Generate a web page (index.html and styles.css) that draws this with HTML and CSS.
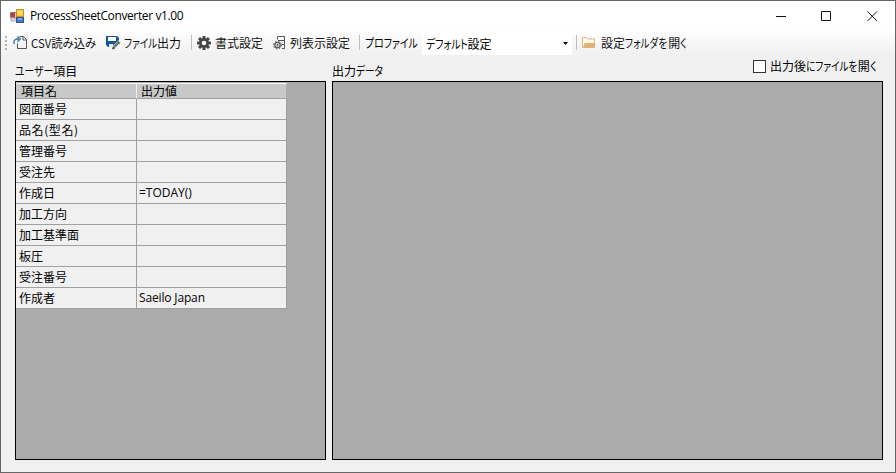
FILE: index.html
```html
<!DOCTYPE html>
<html lang="ja">
<head>
<meta charset="utf-8">
<title>ProcessSheetConverter v1.00</title>
<link rel="stylesheet" href="styles.css">
</head>
<body>
<div class="window">
  <header class="titlebar">
    <svg class="app-icon" width="15" height="14" viewBox="0 0 15 14">
      <rect x=".5" y="3.5" width="7" height="5" fill="#f3dfda" stroke="#aa6c62"/>
      <rect x="1" y="4" width="4" height="4" fill="#bf3d31"/>
      <rect x="6.500" y=".5" width="7" height="7" fill="#ffc93b" stroke="#c19234"/>
      <rect x="8" y="2" width="4" height="3" fill="#ffe36c"/>
      <rect x="1" y="9" width="4" height="3" fill="#d9dce3" stroke="#a9adb6"/>
      <rect x="6.500" y="8.500" width="7" height="5" fill="#4774c3" stroke="#355690"/>
      <rect x="8" y="9" width="4" height="2" fill="#82a7e5"/>
    </svg>
    <span class="title">ProcessSheetConverter v1.00</span>
    <div class="controls">
      <svg width="10" height="11" viewBox="0 0 10 11"><path d="M0 5.500h10" stroke="#111"/></svg>
      <svg width="11" height="11" viewBox="0 0 11 11"><path d="M.5 .5h9v9h-9z" fill="none" stroke="#111"/></svg>
      <svg width="11" height="11" viewBox="0 0 11 11"><path d="M.5 .5l9.500 9.500M10 .5l-9.500 9.500" stroke="#111"/></svg>
    </div>
  </header>

  <nav class="toolbar">
    <span class="grip"></span>
    <button class="tool tool-csv">
      <svg width="15" height="15" viewBox="0 0 15 15" fill="none">
        <path d="M6.500 1.500h4l3 3v9h-9v-5M10 1.500v3.500h3.500" stroke="#555"/>
        <path d="M1.500 9C-.2 5.500 2 3.800 6 4M4.500 1.500L7.200 4 4.500 6.700" stroke="#2f77ad" stroke-width="1.300"/>
      </svg>
      <span class="csv-text">CSV読み込み</span>
    </button>
    <button class="tool tool-output">
      <svg width="15" height="15" viewBox="0 0 15 15">
        <path d="M0 1h11l2 2v4l-5 5H2l-2-2z" fill="#11559b"/>
        <path d="M2 2h8v4H2z" fill="#fff"/>
        <path d="M3 9h4v3H3z" fill="#dce9f5"/>
        <path d="M6.500 14l.8-3.500 5-5 2.300 2.300-5 5z" fill="#777" stroke="#fff" stroke-width=".6"/>
        <path d="M6.500 14l.5-2 1.500 1.500zM11.500 6.500l2 2" fill="#333" stroke="#444" stroke-width=".7"/>
      </svg>
      <span><span class="kana k4">ファイル</span>出力</span>
    </button>
    <i class="sep sep-a"></i>
    <button class="tool tool-format">
      <svg width="14" height="14" viewBox="0 0 14 14">
        <g fill="#444"><rect x="5.500" width="3" height="14" rx=".5"/><rect x="5.500" width="3" height="14" rx=".5" transform="rotate(45 7 7)"/><rect x="5.500" width="3" height="14" rx=".5" transform="rotate(90 7 7)"/><rect x="5.500" width="3" height="14" rx=".5" transform="rotate(135 7 7)"/><circle cx="7" cy="7" r="4.800"/></g>
        <circle cx="7" cy="7" r="2.300" fill="#f8f8f8"/>
      </svg>
      <span>書式設定</span>
    </button>
    <button class="tool tool-columns">
      <svg width="14" height="15" viewBox="0 0 14 15" fill="none" stroke="#555">
        <path d="M4.500 4.500V1.500h7v12H9M5 5.500h6.500M8.500 9.500h3"/>
        <circle cx="4.500" cy="10" r="2.700" stroke-width="1.300"/>
        <circle cx="4.500" cy="10" r="4" stroke-width="1" stroke-dasharray="1.600 1.540"/>
        <circle cx="4.500" cy="10" r=".7" fill="#555"/>
      </svg>
      <span>列表示設定</span>
    </button>
    <i class="sep sep-b"></i>
    <span class="profile-label"><span class="kana k6">プロファイル</span></span>
    <div class="combo">
      <span><span class="kana k5">デフォルト</span>設定</span>
      <svg width="5" height="3" viewBox="0 0 5 3"><path d="M0 0h5L2.500 3z" fill="#000"/></svg>
    </div>
    <i class="sep sep-c"></i>
    <button class="tool tool-folder">
      <svg width="14" height="12" viewBox="0 0 14 12">
        <path d="M.5 10.500v-10h4l1.500 1.500h6.500v8.500z" fill="#fffaf0" stroke="#dfb577"/>
        <path d="M1 11l1.500-5h11L12.500 11z" fill="#dfb577"/>
      </svg>
      <span>設定<span class="kana k5">フォルダを</span>開<span class="kana k1">く</span></span>
    </button>
  </nav>

  <main class="content">
    <section class="pane user-pane">
      <div class="pane-head"><label class="user-label"><span class="kana k4">ユーザー</span>項目</label></div>
      <div class="view">
        <table class="grid">
          <thead><tr><th>項目名</th><th>出力値</th></tr></thead>
          <tbody>
            <tr><td>図面番号</td><td></td></tr>
            <tr><td class="model">品名(型名)</td><td></td></tr>
            <tr><td>管理番号</td><td></td></tr>
            <tr><td>受注先</td><td></td></tr>
            <tr><td>作成日</td><td class="formula">=TODAY()</td></tr>
            <tr><td>加工方向</td><td></td></tr>
            <tr><td>加工基準面</td><td></td></tr>
            <tr><td>板圧</td><td></td></tr>
            <tr><td>受注番号</td><td></td></tr>
            <tr><td>作成者</td><td class="author">Saeilo Japan</td></tr>
          </tbody>
        </table>
      </div>
    </section>
    <section class="pane output-pane">
      <div class="pane-head">
        <label class="output-label">出力<span class="kana k3">データ</span></label>
        <label class="open-after"><i class="checkbox"></i><span>出力後<span class="kana k6">にファイルを</span>開<span class="kana k1">く</span></span></label>
      </div>
      <div class="view"></div>
    </section>
  </main>
</div>
</body>
</html>
```
FILE: styles.css
```css
* { box-sizing: border-box; }
body { margin: 0; }
.window {
  width: 896px;
  height: 473px;
  border: 1px solid #666;
  background: #f0f0f0;
  color: #000;
  font: 12px/16px "Noto Sans CJK JP", sans-serif;
  font-feature-settings: "palt";
  display: flex;
  flex-direction: column;
  overflow: hidden;
  white-space: nowrap;
}
.titlebar {
  height: 30px;
  flex: none;
  display: flex;
  align-items: center;
  padding: 0 17px 0 9px;
  background: #fff;
}
.app-icon { margin-right: 5px; }
.title { font: 12px/16px "Open Sans", sans-serif; letter-spacing: -.38px; }
.controls { margin-left: auto; display: flex; gap: 35px; }
.toolbar {
  height: 25px;
  flex: none;
  display: flex;
  align-items: center;
  padding: 0 0 2px 4px;
  background: linear-gradient(#fdfdfd, #f0f0f0);
}
.grip {
  width: 2px;
  height: 14px;
  margin-right: 6px;
  background: repeating-linear-gradient(#b4b4b4 0 2px, transparent 2px 4px);
}
.kana {
  display: inline-block;
  transform: scaleX(.8);
  transform-origin: left;
}
.k1 { margin-right: -2px; }
.k3 { margin-right: -7px; }
.k4 { margin-right: -8.500px; }
.k5 { margin-right: -9.500px; }
.k6 { margin-right: -12.500px; }
.tool {
  display: flex;
  align-items: center;
  flex: none;
  gap: 4px;
  padding: 0;
  border: 0;
  background: none;
  color: #111;
  font: inherit;
  font-feature-settings: inherit;
}
.tool svg { flex: none; }
.tool-csv { width: 93px; gap: 3px; }
.csv-text { transform: scaleX(.945); transform-origin: left; }
.tool-output { width: 85px; gap: 3px; }
.tool-format { width: 76px; gap: 4px; }
.tool-columns { width: 85px; gap: 3px; }
.sep { width: 1px; height: 15px; flex: none; background: #bcbcbc; }
.sep-a { margin-right: 5px; }
.sep-b { margin: 0 5px 0 1px; }
.sep-c { margin: 0 5px 0 4px; }
.profile-label { width: 57px; flex: none; }
.profile-label .kana { transform: scaleX(.82); }
.combo {
  width: 150px;
  height: 23px;
  flex: none;
  display: flex;
  align-items: center;
  justify-content: space-between;
  padding: 0 4px;
  margin-bottom: -2px;
  background: #fff;
}
.combo .kana { transform: scaleX(.82); }
.tool-folder { gap: 5px; }
.content { flex: 1; display: flex; gap: 6px; padding: 0 12px 12px 14px; }
.pane { display: flex; flex-direction: column; }
.user-pane { width: 311px; }
.output-pane { flex: 1; }
.pane-head {
  height: 25px;
  flex: none;
  display: flex;
  justify-content: space-between;
  align-items: flex-start;
}
.user-label, .output-label { padding-top: 7px; }
.user-label .kana { transform: scaleX(.82); }
.open-after { display: flex; align-items: center; gap: 4px; padding: 2px 7px 0 0; }
.checkbox { width: 13px; height: 13px; border: 1px solid #333; background: #fff; }
.view { flex: 1; padding-top: 1px; border: 1px solid #000; background: #ababab; }
.grid { width: 271px; table-layout: fixed; border-collapse: separate; border-spacing: 0; }
.grid th, .grid td { border: solid #a0a0a0; border-width: 0 1px 1px 0; text-align: left; font-weight: 400; }
.grid th:first-child, .grid td:first-child { width: 121px; }
.grid th { height: 16px; padding: 0 0 0 5px; line-height: 14px; background: #c8c8c8; border-top: 1px solid #f8f8f8; border-right-color: #eee; }
.grid th + th { padding-left: 4px; border-right-color: #ababab; }
.grid td { height: 21px; padding: 0 0 1px 2px; line-height: 18px; background: #f0f0f0; }
.grid td:first-child { padding-left: 3px; }
.grid .model { letter-spacing: .6px; }
.grid .formula, .grid .author { font-family: "Open Sans", sans-serif; }
.grid .author { letter-spacing: -.15px; }
```
